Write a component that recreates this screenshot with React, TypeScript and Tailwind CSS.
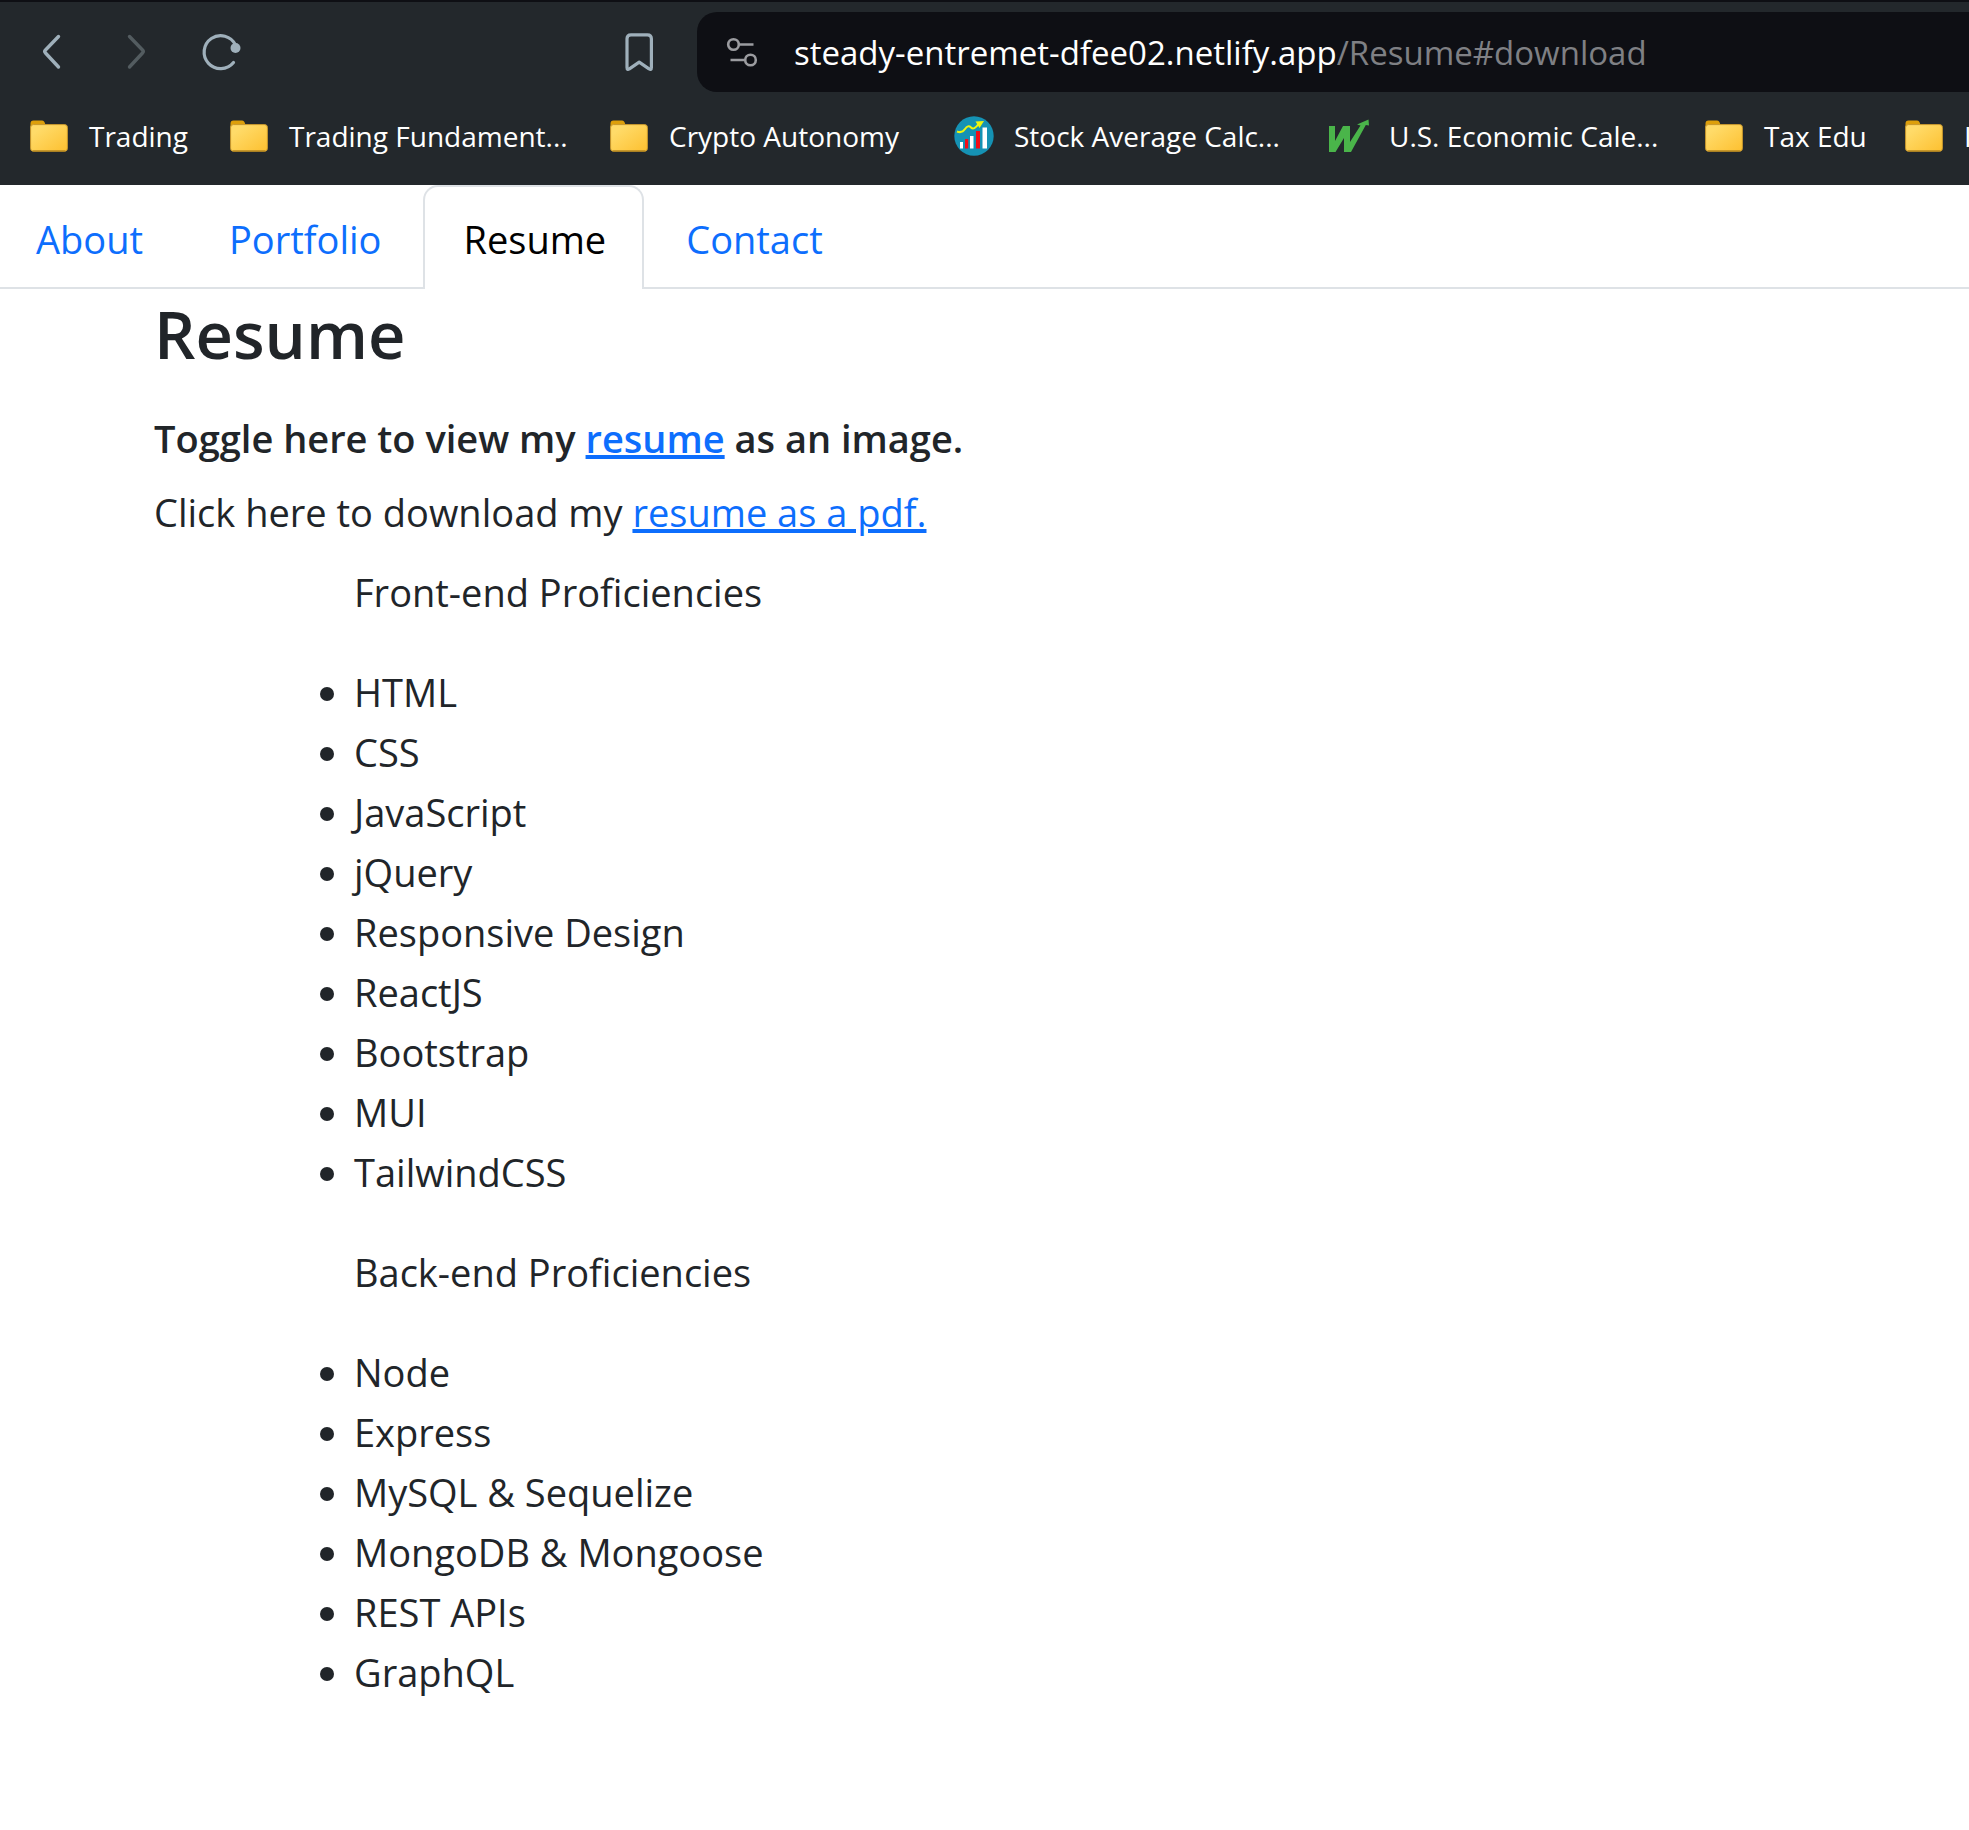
import type { ReactNode } from "react";

function BackIcon() {
  return (
    <svg className="h-10 w-6" viewBox="0 0 24 40" fill="none" stroke="#9fb0bb" strokeWidth="3.4" strokeLinecap="round" strokeLinejoin="round">
      <path d="M18.5 4.5 5.500 18Q4 19.500 5.500 21L18.500 35" />
    </svg>
  );
}

function ForwardIcon() {
  return (
    <svg className="h-10 w-6" viewBox="0 0 24 40" fill="none" stroke="#535c60" strokeWidth="3.4" strokeLinecap="round" strokeLinejoin="round">
      <path d="M5.5 4.500 18.500 18Q20 19.500 18.500 21L5.500 35" />
    </svg>
  );
}

function ReloadIcon() {
  return (
    <svg className="size-10" viewBox="0 0 40 40" fill="none">
      <path d="M32.5 30.500A16.500 16.500 0 1 1 34.500 13" stroke="#9fb0bb" strokeWidth="3.2" strokeLinecap="round" />
      <circle cx="34.5" cy="16" r="5" fill="#9fb0bb" />
    </svg>
  );
}

function BookmarkIcon() {
  return (
    <svg className="h-10 w-8" viewBox="0 0 32 40" fill="none" stroke="#9fb0bb" strokeWidth="3.2" strokeLinejoin="round">
      <path d="M8 2.8H24.4Q28.4 2.8 28.4 6.8V35.6Q28.4 38.6 26 36.8L16.2 30.2 6.4 36.8Q4 38.6 4 35.6V6.8Q4 2.8 8 2.8Z" />
    </svg>
  );
}

function SiteInfoIcon() {
  return (
    <svg className="h-8 w-8" viewBox="0 0 32 32" fill="none" stroke="#9b9ca0" strokeWidth="2.6">
      <circle cx="7.5" cy="8.5" r="5.3" />
      <path d="M13 8.5H27.5M4.500 24H19" />
      <circle cx="24.500" cy="24" r="5.300" />
    </svg>
  );
}

function FolderIcon() {
  return (
    <svg className="size-10" viewBox="0 0 40 40">
      <defs>
        <linearGradient id="folder" x1="0" y1="0" x2="1" y2="1">
          <stop offset="0.2" stopColor="#ffdb69" />
          <stop offset="1" stopColor="#fdc030" />
        </linearGradient>
      </defs>
      <path d="M1.500 12V7.500Q1.500 4.500 4.500 4.500H13Q15.500 4.500 16.300 8.500L18 12Z" fill="#dd9f0b" />
      <rect x="1.600" y="8.600" width="36.800" height="26.600" rx="2.800" fill="url(#folder)" stroke="#c8982c" strokeWidth="1" />
      <path d="M4 35H36" stroke="#ad801f" strokeWidth="1.200" />
    </svg>
  );
}

function StockIcon() {
  return (
    <svg className="size-10" viewBox="0 0 40 40">
      <circle cx="20" cy="20" r="19.700" fill="#1592b4" />
      <path d="M6 26h3v6.500H6zM16 20h3.500v12.500H16zM28.500 11.500h4.500v21h-4.500z" fill="#fff" />
      <path d="M11 23h3.200v9.500H11zM22 15h4v17.500h-4z" fill="#f20d17" />
      <path d="M3 15.500Q8 17.500 11 13T17 11.500 24.500 8" fill="none" stroke="#eef50e" strokeWidth="2" />
      <path d="M21.500 5.500 30 5 25.500 12Z" fill="#eef50e" />
    </svg>
  );
}

function ArrowLogo() {
  return (
    <svg className="size-10" viewBox="0 0 40 40" fill="#4ab54a">
      <path d="M0 10H6V25L14 10H21V26L31.500 9.500 28 8.500 39.500 3.500 40 9.500 36.800 9 22 36H15V22L6.500 36H0Z" />
    </svg>
  );
}

function Bookmark({ icon, label, width }: { icon: ReactNode; label: string; width: string }) {
  return (
    <li className={`shrink-0 ${width}`}>
      <a href="#bookmark" className="flex items-center gap-5 whitespace-nowrap">
        {icon}
        <span>{label}</span>
      </a>
    </li>
  );
}

function BrowserChrome() {
  return (
    <header className="overflow-hidden border-t-2 border-[#0e0f14] bg-[#23282c] text-white">
      <div className="flex items-center pt-[10px] pl-10">
        <button aria-label="Back"><BackIcon /></button>
        <button aria-label="Forward" disabled className="ml-[60px]"><ForwardIcon /></button>
        <button aria-label="Reload" className="ml-[53px]"><ReloadIcon /></button>
        <button aria-label="Bookmark this page" className="ml-[382px]"><BookmarkIcon /></button>
        <div className="ml-[42px] flex h-20 min-w-0 flex-1 items-center gap-9 rounded-l-[20px] bg-[#0e0f14] pl-[29px] text-[33px]">
          <button aria-label="Site information"><SiteInfoIcon /></button>
          <div role="textbox" aria-label="Address" className="pt-0.5 whitespace-nowrap">
            steady-entremet-dfee02.netlify.app<span className="text-[#7f8084]">/Resume#download</span>
          </div>
        </div>
      </div>
      <ul className="flex h-[93px] items-center pb-1.5 pl-[29px] text-[28px]">
        <Bookmark icon={<FolderIcon />} label="Trading" width="w-[200px]" />
        <Bookmark icon={<FolderIcon />} label="Trading Fundament..." width="w-[380px]" />
        <Bookmark icon={<FolderIcon />} label="Crypto Autonomy" width="w-[345px]" />
        <Bookmark icon={<StockIcon />} label="Stock Average Calc..." width="w-[375px]" />
        <Bookmark icon={<ArrowLogo />} label="U.S. Economic Cale..." width="w-[375px]" />
        <Bookmark icon={<FolderIcon />} label="Tax Edu" width="w-[200px]" />
        <Bookmark icon={<FolderIcon />} label="I" width="w-[200px]" />
      </ul>
    </header>
  );
}

const frontEnd = ["HTML", "CSS", "JavaScript", "jQuery", "Responsive Design", "ReactJS", "Bootstrap", "MUI", "TailwindCSS"];
const backEnd = ["Node", "Express", "MySQL & Sequelize", "MongoDB & Mongoose", "REST APIs", "GraphQL"];

const linkStyle = "text-[#0d6efd] underline decoration-4 underline-offset-2";

function Skills({ title, items }: { title: string; items: string[] }) {
  return (
    <section className="mb-10 pl-[200px]">
      <p className="mb-10">{title}</p>
      <ul className="list-disc">
        {items.map((item) => (
          <li key={item}>{item}</li>
        ))}
      </ul>
    </section>
  );
}

export default function App() {
  return (
    <div className="min-h-screen overflow-x-hidden bg-white font-['Open_Sans','Noto_Sans',sans-serif] text-[38px] leading-[60px] text-[#212529]">
      <BrowserChrome />
      <nav className="flex h-[104px] border-b-2 border-[#dee2e6] text-[#0d6efd]">
        <a href="#about" className="pt-6 pr-11 pl-9">About</a>
        <a href="#portfolio" className="px-[42px] pt-6">Portfolio</a>
        <a href="#resume" aria-current="page" className="-mb-0.5 rounded-t-[15px] border-2 border-b-0 border-[#dee2e6] bg-white pt-[22px] pr-9 pl-[38px] text-black">Resume</a>
        <a href="#contact" className="px-[42px] pt-6">Contact</a>
      </nav>
      <main className="pt-[3px] pl-[154px]">
        <h1 className="mb-[38px] text-[65px] leading-[84px] font-semibold">Resume</h1>
        <h2 className="mb-5 leading-[48px] font-semibold">
          Toggle here to view my <a href="#image" className={linkStyle}>resume</a> as an image.
        </h2>
        <p className="mb-5">
          Click here to download my <a href="#download" className={linkStyle}>resume as a pdf.</a>
        </p>
        <Skills title="Front-end Proficiencies" items={frontEnd} />
        <Skills title="Back-end Proficiencies" items={backEnd} />
      </main>
    </div>
  );
}
